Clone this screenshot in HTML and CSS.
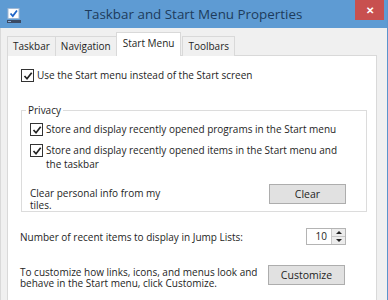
FILE: index.html
```html
<!DOCTYPE html>
<html lang="en">

<head>
    <meta charset="UTF-8">
    <meta name="viewport" content="width=device-width, initial-scale=1.0">
    <title>Taskbar and Start Menu Properties</title>
    <link rel="stylesheet" href="styles.css">
</head>

<body>
    <div class="window">
        <div class="titlebar">
            <div class="app-icon">
                <svg width="16" height="16" viewBox="0 0 16 16">
                    <rect x="1" y="0.5" width="11" height="10" fill="#ffffff" stroke="#9fb8d4" />
                    <path d="M3.5 5.5 L5.8 8 L10 2.5" fill="none" stroke="#1e64c8" stroke-width="1.8" />
                    <rect x="0" y="12" width="14" height="3" fill="#3b4a63" />
                    <rect x="1" y="13" width="3" height="1" fill="#8fb0da" />
                </svg>
            </div>
            <div class="title">Taskbar and Start Menu Properties</div>
            <div class="close">&#x2715;</div>
        </div>

        <div class="content">
            <div class="tabs">
                <div class="tab">Taskbar</div>
                <div class="tab">Navigation</div>
                <div class="tab active">Start Menu</div>
                <div class="tab">Toolbars</div>
            </div>

            <div class="panel">
                <div class="check-row top-check">
                    <span class="box"><svg width="10" height="10" viewBox="0 0 10 10"><path d="M1.5 5 L4 7.8 L8.7 1.8" fill="none" stroke="#222" stroke-width="1.7" /></svg></span>
                    <span>Use the Start menu instead of the Start screen</span>
                </div>

                <fieldset class="group">
                    <legend>Privacy</legend>
                    <div class="check-row">
                        <span class="box"><svg width="10" height="10" viewBox="0 0 10 10"><path d="M1.5 5 L4 7.8 L8.7 1.8" fill="none" stroke="#222" stroke-width="1.7" /></svg></span>
                        <span>Store and display recently opened programs in the Start menu</span>
                    </div>
                    <div class="check-row">
                        <span class="box"><svg width="10" height="10" viewBox="0 0 10 10"><path d="M1.5 5 L4 7.8 L8.7 1.8" fill="none" stroke="#222" stroke-width="1.7" /></svg></span>
                        <span class="wrap-text">Store and display recently opened items in the Start menu and the taskbar</span>
                    </div>
                    <div class="action-row clear-row">
                        <div class="action-text">Clear personal info from my tiles.</div>
                        <button class="btn">Clear</button>
                    </div>
                </fieldset>

                <div class="action-row jump-row">
                    <div>Number of recent items to display in Jump Lists:</div>
                    <div class="spinner">
                        <span class="spin-value">10</span>
                        <span class="spin-arrows">
                            <span class="arrow up"></span>
                            <span class="arrow down"></span>
                        </span>
                    </div>
                </div>

                <div class="action-row custom-row">
                    <div class="custom-text">To customize how links, icons, and menus look and behave in the Start menu, click Customize.</div>
                    <button class="btn">Customize</button>
                </div>
            </div>
        </div>
    </div>
</body>

</html>
```

FILE: styles.css
```css
body {
    margin: 0;
    font-family: "Open Sans", "Noto Sans", sans-serif;
    font-size: 10px;
    color: #1e1e1e;
    background-color: #f0f0f0;
    overflow: hidden;
}

.window {
    width: 387px;
    height: 300px;
    border-right: 1px solid #5b94cc;
    background-color: #f0f0f0;
}

.titlebar {
    display: grid;
    grid-template-columns: 60px 1fr 60px;
    align-items: start;
    height: 28px;
    background-color: #5e9bd3;
}

.app-icon {
    padding: 8px 0 0 7px;
}

.title {
    text-align: center;
    font-size: 13.4px;
    color: #1d3b5c;
    padding-top: 5px;
}

.close {
    justify-self: end;
    margin-right: 3px;
    width: 29px;
    height: 20px;
    background-color: #c8504f;
    color: #ffffff;
    font-size: 10px;
    font-weight: bold;
    text-align: center;
    line-height: 20px;
}

.content {
    border-left: 1px solid #d9d9d9;
    padding: 5px 0 0 6px;
}

.tabs {
    display: flex;
    align-items: flex-end;
    height: 23px;
    position: relative;
    z-index: 1;
}

.tab {
    height: 19px;
    line-height: 19px;
    padding: 0 5px;
    border: 1px solid #d9d9d9;
    border-bottom: none;
    margin-right: -1px;
    background-color: #f0f0f0;
    font-size: 10px;
}

.tab.active {
    height: 23px;
    line-height: 20px;
    background-color: #ffffff;
    padding: 0 6px;
    margin: 0 1px 0 0;
}

.panel {
    width: 370px;
    height: 260px;
    margin-top: -1px;
    background-color: #ffffff;
    border: 1px solid #d9d9d9;
    padding: 0 0 0 12px;
    box-sizing: border-box;
}

.check-row {
    display: flex;
    align-items: flex-start;
    gap: 3px;
    line-height: 14px;
}

.box {
    flex: none;
    width: 11px;
    height: 11px;
    border: 1px solid #333333;
    background-color: #ffffff;
    display: flex;
    align-items: center;
    justify-content: center;
    margin-top: 1px;
}

.top-check {
    margin-top: 12px;
    margin-left: 1px;
}

.group {
    margin: 21px 0 0 1px;
    width: 346px;
    box-sizing: border-box;
    border: 1px solid #dcdcdc;
    padding: 5px 0 0 8px;
    height: 109px;
}

.group legend {
    padding: 0 2px;
    margin-left: -4px;
}

.group .check-row {
    margin-bottom: 7px;
}

.wrap-text {
    width: 305px;
}

.action-row {
    display: flex;
    justify-content: space-between;
    align-items: flex-start;
}

.clear-row {
    margin-top: 13px;
    padding-right: 20px;
}

.action-text {
    width: 140px;
    line-height: 12px;
    padding-top: 3px;
}

.btn {
    font-family: inherit;
    font-size: 10.5px;
    width: 77px;
    height: 20px;
    padding: 0;
    background-color: #e1e1e1;
    border: 1px solid #adadad;
    color: #1e1e1e;
}

.jump-row {
    margin-top: 16px;
    padding-right: 30px;
    align-items: center;
}

.spinner {
    display: flex;
    width: 40px;
    height: 17px;
    box-sizing: border-box;
    border: 1px solid #b4b4b4;
    background-color: #ffffff;
}

.spin-value {
    flex: 1;
    text-align: right;
    padding-right: 4px;
    line-height: 15px;
}

.spin-arrows {
    width: 13px;
    display: flex;
    flex-direction: column;
    border-left: 1px solid #c8c8c8;
    background-color: #ececec;
}

.arrow {
    flex: 1;
    display: flex;
    align-items: center;
    justify-content: center;
}

.arrow.up {
    border-bottom: 1px solid #c8c8c8;
}

.arrow.up::before {
    content: "";
    border-left: 3px solid transparent;
    border-right: 3px solid transparent;
    border-bottom: 3px solid #222;
}

.arrow.down::before {
    content: "";
    border-left: 3px solid transparent;
    border-right: 3px solid transparent;
    border-top: 3px solid #222;
}

.custom-row {
    margin-top: 20px;
    padding-right: 31px;
}

.custom-text {
    width: 246px;
    line-height: 11px;
    padding-top: 2px;
}
```
